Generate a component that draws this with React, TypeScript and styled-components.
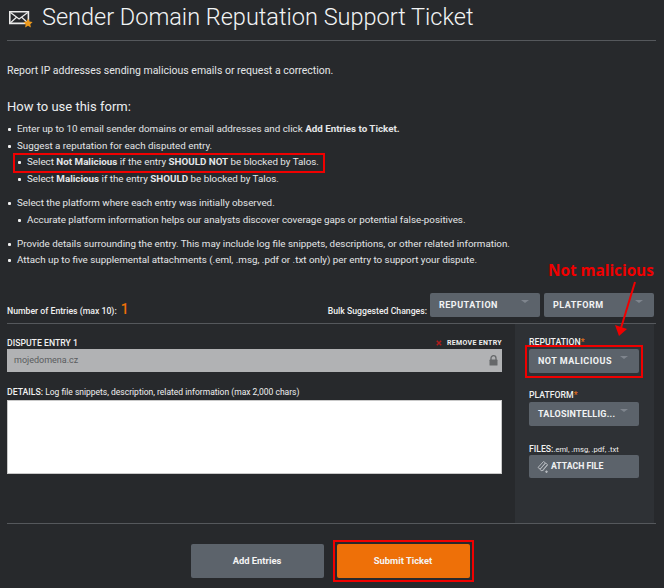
import React from 'react';
import styled, { createGlobalStyle } from 'styled-components';

const GlobalStyle = createGlobalStyle`
  html, body {
    margin: 0;
    background: #27292c;
  }
  *, *::before, *::after {
    box-sizing: border-box;
  }
`;

const Page = styled.div`
  position: relative;
  width: 664px;
  height: 588px;
  overflow: hidden;
  padding: 0 8px 0 7px;
  background: #27292c;
  color: #e4e6e8;
  font-family: Roboto, "Liberation Sans", sans-serif;
  font-size: 10.5px;
`;

const Header = styled.header`
  display: flex;
  align-items: center;
  height: 41px;
  padding: 0 0 7px 2px;
  border-bottom: 1px solid #55585c;
`;

const Title = styled.h1`
  margin: 0 0 0 9px;
  font-size: 23.5px;
  font-weight: 300;
  line-height: 30px;
  color: #f2f4f5;
`;

const Intro = styled.p`
  margin: 23px 0 0;
  line-height: 14px;
`;

const HowTo = styled.h2`
  margin: 20px 0 0;
  font-size: 13px;
  font-weight: 400;
  line-height: 18px;
  color: #eceef0;
`;

const List = styled.ul<{ $gap?: number }>`
  list-style: none;
  margin: ${(p) => p.$gap ?? 0}px 0 0;
  padding: 0 0 0 10px;
  font-size: 9.8px;
`;

const Item = styled.li<{ $boxed?: boolean }>`
  position: relative;
  line-height: 16.6px;
  white-space: nowrap;
  &::before {
    content: '';
    position: absolute;
    left: -9px;
    top: 7px;
    width: 3px;
    height: 3px;
    border-radius: 1px;
    background: #f0f0f0;
  }
  ${(p) =>
    p.$boxed &&
    `
    &::after {
      content: '';
      position: absolute;
      left: -14px;
      top: -1px;
      width: 312px;
      height: 20px;
      border: 2px solid #f00000;
    }
  `}
`;

const Bold = styled.strong`
  font-weight: 700;
`;

const EntriesBar = styled.div`
  display: flex;
  align-items: flex-end;
  height: 31px;
  margin-top: 24px;
  padding: 0 2px 6px 0;
  border-bottom: 1px solid #55585c;
`;

const EntriesCount = styled.div`
  display: flex;
  align-items: baseline;
  margin-right: auto;
  font-size: 8.7px;
  font-weight: 500;
  line-height: 12px;
  color: #f0f0f0;
`;

const Count = styled.span`
  margin-left: 4px;
  font-size: 14px;
  color: #ee7008;
`;

const BulkLabel = styled.span`
  margin-right: 3px;
  font-size: 8.7px;
  font-weight: 500;
  line-height: 12px;
  color: #f0f0f0;
`;

const Select = styled.div<{ $left?: number; $tight?: boolean }>`
  position: relative;
  display: flex;
  align-items: center;
  width: 110px;
  height: 24px;
  margin-left: ${(p) => p.$left ?? 0}px;
  padding-left: 9px;
  border-radius: 2px;
  background: #5c636b;
  color: #f2f3f4;
  font-size: 9px;
  font-weight: 700;
  letter-spacing: ${(p) => (p.$tight ? 0.25 : 0.5)}px;
  &::after {
    content: '';
    position: absolute;
    right: 11px;
    top: 7px;
    border-style: solid;
    border-color: #7f858d transparent transparent;
    border-width: 3px 4px 0;
  }
`;

const Columns = styled.div`
  display: flex;
  height: 200px;
  border-bottom: 1px solid #55585c;
`;

const Main = styled.div`
  flex: 1;
  padding-right: 13px;
`;

const EntryHead = styled.div`
  display: flex;
  justify-content: space-between;
  align-items: flex-end;
  height: 25px;
`;

const FieldLabel = styled.label`
  display: block;
  font-size: 8.7px;
  font-weight: 500;
  line-height: 12px;
  color: #f0f0f0;
`;

const Regular = styled.span`
  font-size: 8.5px;
  font-weight: 400;
`;

const Remove = styled.span`
  display: flex;
  align-items: center;
  gap: 5px;
  font-size: 7px;
  font-weight: 700;
  letter-spacing: 0.3px;
  line-height: 12px;
  color: #eeeeee;
`;

const DomainInput = styled.div`
  display: flex;
  justify-content: space-between;
  align-items: center;
  height: 23px;
  padding: 0 4px 0 7px;
  background: #b1b2b4;
  color: #5a5c5e;
  font-size: 9px;
`;

const DetailsLabel = styled(FieldLabel)`
  margin-top: 14px;
`;

const TextBox = styled.div`
  height: 74px;
  margin-top: 2px;
  background: #ffffff;
  border: 1px solid #c9c9c9;
`;

const Side = styled.aside`
  width: 139px;
  margin-right: 2px;
  padding-left: 14px;
  background: #2e3135;
`;

const SideLabel = styled(FieldLabel)<{ $top: number; $bottom: number }>`
  margin-top: ${(p) => p.$top}px;
  margin-bottom: ${(p) => p.$bottom}px;
`;

const Star = styled.span`
  color: #e8701a;
`;

const Files = styled.span`
  font-weight: 400;
  font-size: 7.6px;
`;

const BoxedSelect = styled(Select)`
  &::before {
    content: '';
    position: absolute;
    left: -4px;
    top: -4px;
    right: -4px;
    bottom: -5px;
    border: 2px solid #f00000;
  }
`;

const AttachButton = styled.div`
  display: flex;
  align-items: center;
  width: 110px;
  height: 23px;
  padding-left: 8px;
  border-radius: 2px;
  background: #5c636b;
  color: #f2f3f4;
  font-size: 8.7px;
  font-weight: 700;
`;

const Footer = styled.div`
  display: flex;
  justify-content: center;
  gap: 13px;
  margin-top: 20px;
  padding-right: 3px;
`;

const ActionButton = styled.div<{ $primary?: boolean }>`
  position: relative;
  display: flex;
  align-items: center;
  justify-content: center;
  width: 133px;
  height: 34px;
  border-radius: 2px;
  background: ${(p) => (p.$primary ? '#ee7008' : '#5c636b')};
  color: #f4f4f4;
  font-size: 9.4px;
  font-weight: 700;
  ${(p) =>
    p.$primary &&
    `
    &::after {
      content: '';
      position: absolute;
      left: -4px;
      top: -4px;
      right: -4px;
      bottom: -4px;
      border: 2px solid #f00000;
    }
  `}
`;

const Callout = styled.div`
  position: absolute;
  left: 548px;
  top: 260px;
  font-family: "Open Sans", "Noto Sans", sans-serif;
  font-size: 15.3px;
  font-weight: 700;
  line-height: 20px;
  color: #f00000;
`;

const Arrow = styled.svg`
  position: absolute;
  left: 610px;
  top: 278px;
`;

const MailIcon = () => (
  <svg width="24" height="24" viewBox="0 0 24 24" fill="none">
    <path d="M.8 6.8h18.6v11.6H.8z" stroke="#ececec" strokeWidth="1.6" />
    <path d="M1.5 7.5l8.6 6.5 8.6-6.5M1.5 17.8l6-5.5M18.7 17.8l-6-5.5" stroke="#ececec" strokeWidth="1.2" />
    <path
      d="M19 13.6l1.4 3 3.2.4-2.3 2.2.6 3.2-2.9-1.6-2.9 1.6.6-3.2-2.3-2.2 3.2-.4z"
      fill="#ee9a1c"
    />
  </svg>
);

const LockIcon = () => (
  <svg width="9" height="11" viewBox="0 0 9 11">
    <path d="M2 5V3.2a2.5 2.5 0 0 1 5 0V5" fill="none" stroke="#66686a" strokeWidth="1.3" />
    <rect x="0.5" y="4.6" width="8" height="6" rx="0.6" fill="#66686a" />
  </svg>
);

const ClipIcon = () => (
  <svg width="14" height="13" viewBox="0 0 14 13" fill="none" stroke="#b4b8bd" strokeWidth="1">
    <path d="M1 7.5L6.5 1.5l2 1.5-5.5 6z" />
    <path d="M3 9.5L8.5 3l2 1.5-5.5 6.5z" />
    <path d="M5.5 11l5-6" />
    <path d="M9.5 10.5v2.4M8.3 11.7h2.4" strokeWidth="1.2" />
  </svg>
);

const RemoveIcon = () => (
  <svg width="6" height="6" viewBox="0 0 6 6">
    <path d="M0.8 0.8l4.4 4.4M5.2 0.8L0.8 5.2" stroke="#b01c1c" strokeWidth="1.5" />
  </svg>
);

export default function App() {
  return (
    <Page>
      <GlobalStyle />
      <Header>
        <MailIcon />
        <Title>Sender Domain Reputation Support Ticket</Title>
      </Header>
      <Intro>Report IP addresses sending malicious emails or request a correction.</Intro>
      <HowTo>How to use this form:</HowTo>
      <List $gap={5}>
        <Item>
          Enter up to 10 email sender domains or email addresses and click{' '}
          <Bold>Add Entries to Ticket.</Bold>
        </Item>
        <Item>
          Suggest a reputation for each disputed entry.
          <List>
            <Item $boxed>
              Select <Bold>Not Malicious</Bold> if the entry <Bold>SHOULD NOT</Bold> be blocked by
              Talos.
            </Item>
            <Item>
              Select <Bold>Malicious</Bold> if the entry <Bold>SHOULD</Bold> be blocked by Talos.
            </Item>
          </List>
        </Item>
      </List>
      <List $gap={8}>
        <Item>
          Select the platform where each entry was initially observed.
          <List>
            <Item>
              Accurate platform information helps our analysts discover coverage gaps or potential
              false-positives.
            </Item>
          </List>
        </Item>
      </List>
      <List $gap={7}>
        <Item>
          Provide details surrounding the entry. This may include log file snippets, descriptions,
          or other related information.
        </Item>
        <Item>
          Attach up to five supplemental attachments (.eml, .msg, .pdf or .txt only) per entry to
          support your dispute.
        </Item>
      </List>
      <EntriesBar>
        <EntriesCount>
          Number of Entries (max 10): <Count>1</Count>
        </EntriesCount>
        <BulkLabel>Bulk Suggested Changes:</BulkLabel>
        <Select>REPUTATION</Select>
        <Select $left={4}>PLATFORM</Select>
      </EntriesBar>
      <Columns>
        <Main>
          <EntryHead>
            <FieldLabel>DISPUTE ENTRY 1</FieldLabel>
            <Remove>
              <RemoveIcon />
              REMOVE ENTRY
            </Remove>
          </EntryHead>
          <DomainInput>
            mojedomena.cz
            <LockIcon />
          </DomainInput>
          <DetailsLabel>
            DETAILS: <Regular>Log file snippets, description, related information (max 2,000 chars)</Regular>
          </DetailsLabel>
          <TextBox />
        </Main>
        <Side>
          <SideLabel $top={12} $bottom={1}>
            REPUTATION<Star>*</Star>
          </SideLabel>
          <BoxedSelect>NOT MALICIOUS</BoxedSelect>
          <SideLabel $top={16} $bottom={1}>
            PLATFORM<Star>*</Star>
          </SideLabel>
          <Select $tight>TALOSINTELLIG...</Select>
          <SideLabel $top={17} $bottom={-1}>
            FILES:<Files>.eml, .msg, .pdf, .txt</Files>
          </SideLabel>
          <AttachButton>
            <ClipIcon />
            ATTACH FILE
          </AttachButton>
        </Side>
      </Columns>
      <Footer>
        <ActionButton>Add Entries</ActionButton>
        <ActionButton $primary>Submit Ticket</ActionButton>
      </Footer>
      <Callout>Not malicious</Callout>
      <Arrow width="34" height="62" viewBox="0 0 34 62">
        <path d="M25 4L11 50" stroke="#f00000" strokeWidth="2" />
        <path d="M5 47l12 4-8 7z" fill="#f00000" />
      </Arrow>
    </Page>
  );
}
